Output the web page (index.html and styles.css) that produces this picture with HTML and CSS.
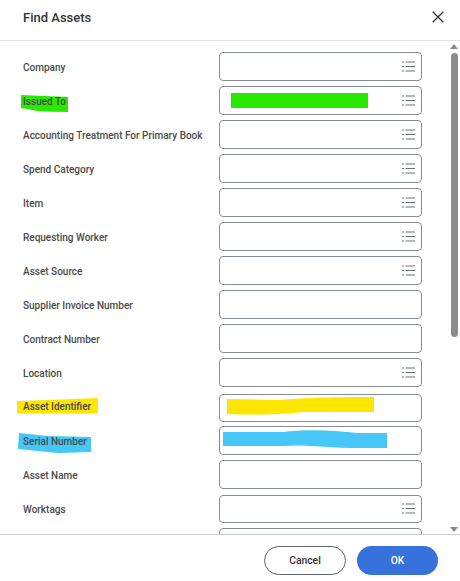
FILE: index.html
```html
<!DOCTYPE html>
<html lang="en">
<head>
<meta charset="utf-8">
<title>Find Assets</title>
<link rel="stylesheet" href="styles.css">
</head>
<body>
<svg class="sprite" width="0" height="0" aria-hidden="true">
  <symbol id="list" viewBox="0 0 13 11">
    <path d="M0 1h2M0 5.5h2M0 10h2M3.5 1H13M3.5 5.5H13M3.5 10H13" fill="none" stroke="currentColor" stroke-width="1"/>
  </symbol>
</svg>
<main class="dialog">
  <header class="head">
    <h1 class="title">Find Assets</h1>
    <svg class="close" viewBox="0 0 12 12" aria-label="Close"><path d="M.7.7l10.6 10.6M11.3.7L.7 11.3" fill="none" stroke="currentColor" stroke-width="1.3"/></svg>
  </header>
  <section class="body">
    <div class="form">
      <div class="row"><span class="label">Company</span><div class="field"><svg class="ico"><use href="#list"/></svg></div></div>
      <div class="row"><span class="label"><svg class="mark mark-green" viewBox="0 0 47 17"><path d="M0 0L47 2V17L20 16.5 0 13Z"/></svg><span class="text">Issued To</span></span><div class="field"><svg class="scrib scrib-green" viewBox="0 0 137 15"><path d="M0 0H137V15H0Z"/></svg><svg class="ico"><use href="#list"/></svg></div></div>
      <div class="row"><span class="label">Accounting Treatment For Primary Book</span><div class="field"><svg class="ico"><use href="#list"/></svg></div></div>
      <div class="row"><span class="label">Spend Category</span><div class="field"><svg class="ico"><use href="#list"/></svg></div></div>
      <div class="row"><span class="label">Item</span><div class="field"><svg class="ico"><use href="#list"/></svg></div></div>
      <div class="row"><span class="label">Requesting Worker</span><div class="field"><svg class="ico"><use href="#list"/></svg></div></div>
      <div class="row"><span class="label">Asset Source</span><div class="field"><svg class="ico"><use href="#list"/></svg></div></div>
      <div class="row"><span class="label">Supplier Invoice Number</span><div class="field"></div></div>
      <div class="row"><span class="label">Contract Number</span><div class="field"></div></div>
      <div class="row"><span class="label">Location</span><div class="field"><svg class="ico"><use href="#list"/></svg></div></div>
      <div class="row row-shift"><span class="label label-up"><svg class="mark mark-yellow" viewBox="0 0 81 16"><path d="M0 3L30 2 81 0V15.500H0Z"/></svg><span class="text">Asset Identifier</span></span><div class="field field-short"><svg class="scrib scrib-yellow" viewBox="0 0 147 18"><path d="M0 2L50 3C75 1 100 0 147 0V15L75 15C50 18 25 18 0 17Z"/></svg></div></div>
      <div class="row"><span class="label"><svg class="mark mark-blue" viewBox="0 0 73 20"><path d="M1 0L30 3 73 4V19L40 20 0 16Z"/></svg><span class="text">Serial Number</span></span><div class="field"><svg class="scrib scrib-blue" viewBox="0 0 164 18"><path d="M0 2H60C80-1 110 0 135 3H164V18H135C105 18 80 14 60 16H0Z"/></svg></div></div>
      <div class="row"><span class="label">Asset Name</span><div class="field"></div></div>
      <div class="row"><span class="label">Worktags</span><div class="field field-short"><svg class="ico"><use href="#list"/></svg></div></div>
      <div class="row"><span class="label"></span><div class="field"></div></div>
    </div>
    <div class="scrollbar">
      <span class="arrow arrow-up"></span>
      <span class="track"><span class="thumb"></span></span>
      <span class="arrow arrow-down"></span>
    </div>
  </section>
  <footer class="foot">
    <button class="btn btn-cancel" type="button">Cancel</button>
    <button class="btn btn-ok" type="button">OK</button>
  </footer>
</main>
</body>
</html>
```
FILE: styles.css
```css
* { box-sizing: border-box; }
html, body { margin: 0; height: 100%; background: #fff; }
body { font-family: Roboto, "Liberation Sans", sans-serif; color: #333; overflow: hidden; }
.sprite { position: absolute; }
.dialog { display: flex; flex-direction: column; height: 581px; width: 460px; }
.head {
  flex: none; height: 41px; display: flex; align-items: center; justify-content: space-between;
  padding: 0 16px 6px 23px; border-bottom: 1px solid #e0e2e4;
}
.title { margin: 0; font-size: 13px; font-weight: 500; color: #333; }
.close { width: 12px; height: 12px; color: #333; }
.body { flex: 1; min-height: 0; display: flex; overflow: hidden; position: relative; }
.form { flex: 1; padding: 11px 0 0 23px; display: flex; flex-direction: column; gap: 5px; min-width: 0; }
.row { flex: none; display: flex; align-items: center; height: 29px; }
.row-shift { margin-top: 1px; margin-bottom: -1px; }
.label { position: relative; top: .5px; width: 196px; flex: none; font-size: 10px; font-weight: 500; color: #4a4a4a; white-space: nowrap; }
.label-up { top: -1.5px; }
.text { position: relative; }
.field {
  position: relative; width: 203px; height: 29px; flex: none; border: 1px solid #868d96; border-radius: 4px; background: #fff;
  display: flex; align-items: center; justify-content: flex-end; padding-right: 6px;
}
.field-short { height: 28px; }
.ico { width: 13px; height: 11px; color: #6b727a; }
.mark, .scrib { position: absolute; }
.mark-green { left: -2px; top: -1px; width: 47px; height: 17px; fill: #2ae800; }
.mark-yellow { left: -6px; top: -3px; width: 81px; height: 16px; fill: #ffe600; }
.mark-blue { left: -5px; top: -3px; width: 73px; height: 20px; fill: #45c8f7; }
.scrib-green { left: 11px; top: 6px; width: 137px; height: 15px; fill: #26e800; }
.scrib-yellow { left: 7px; top: 2px; width: 147px; height: 18px; fill: #ffe600; }
.scrib-blue { left: 3px; top: 3px; width: 164px; height: 18px; fill: #45c8f7; }
.scrollbar { flex: none; width: 10px; margin-right: 1px; display: flex; flex-direction: column; align-items: center; padding-top: 3px; height: 100%; }
.arrow { flex: none; width: 0; height: 0; border-left: 4px solid transparent; border-right: 4px solid transparent; }
.arrow-up { border-bottom: 5px solid #8a8a8a; }
.arrow-down { border-top: 5px solid #8a8a8a; margin-bottom: 2px; }
.track { flex: 1; width: 7px; padding-top: 4px; padding-bottom: 190px; display: flex; }
.thumb { flex: 1; background: #8c8c8c; border-radius: 4px; }
.foot {
  flex: none; height: 47px; border-top: 1px solid #c9ccce; display: flex; justify-content: flex-end; align-items: flex-start;
  gap: 11px; padding: 11px 22px 0 0;
}
.btn { width: 82px; height: 29px; border-radius: 15px; font: 500 10.3px Roboto, "Liberation Sans", sans-serif; padding: 0; }
.btn-cancel { background: #fff; border: 1px solid #5e6369; color: #333; }
.btn-ok { width: 81px; background: #3671dc; border: 0; color: #fff; }
```
